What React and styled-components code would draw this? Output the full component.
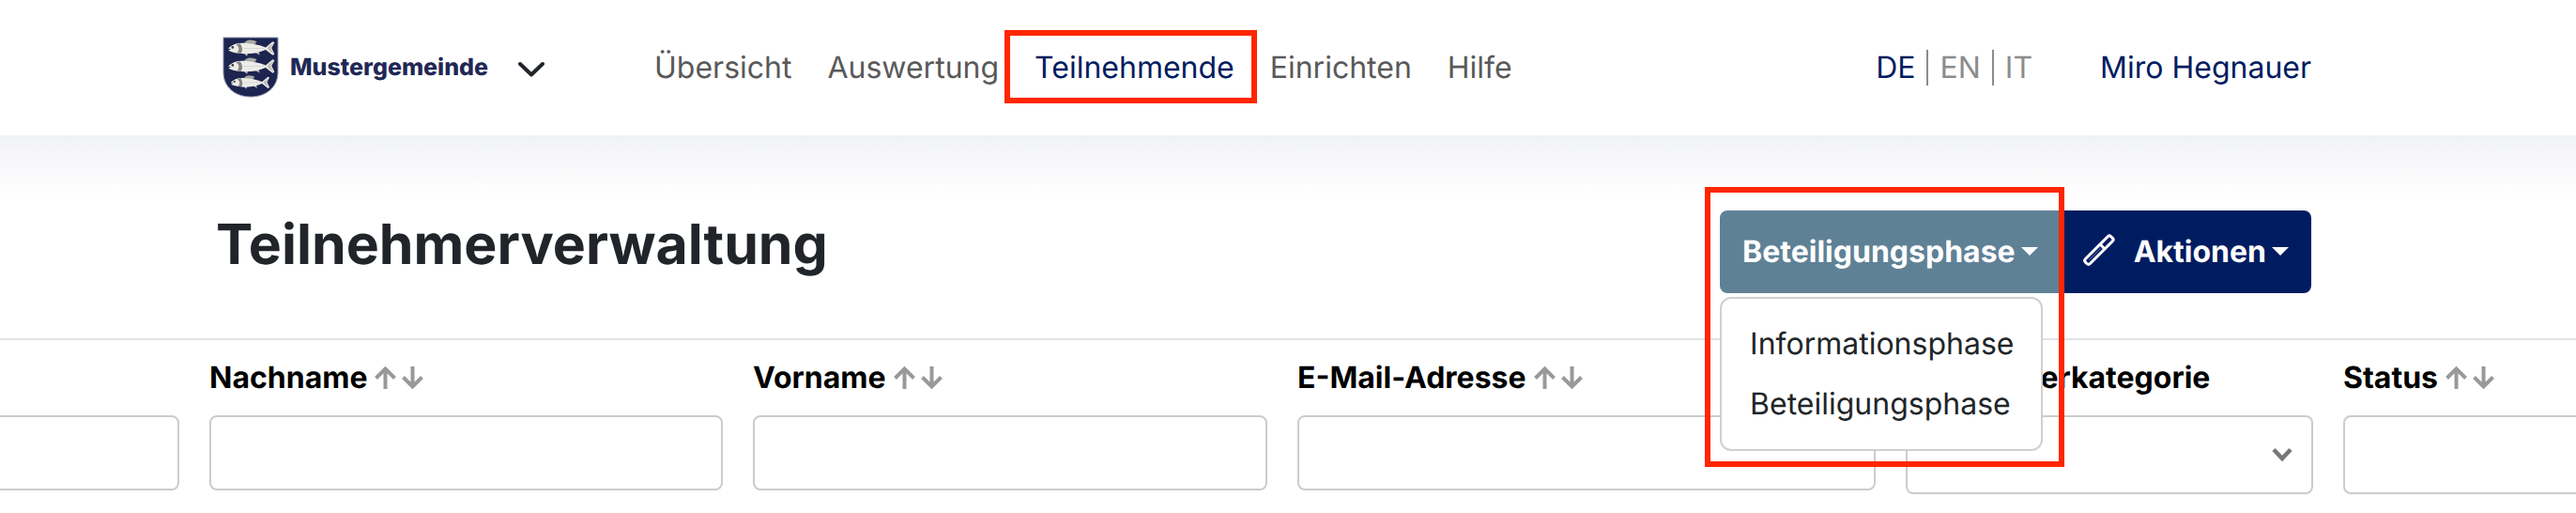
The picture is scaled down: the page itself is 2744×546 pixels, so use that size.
import React from 'react'
import styled, { createGlobalStyle } from 'styled-components'

const columns = [
  { id: 'id', label: '', width: 580 },
  { id: 'lastname', label: 'Nachname', width: 579, sortable: true },
  { id: 'firstname', label: 'Vorname', width: 580, sortable: true },
  { id: 'email', label: 'E-Mail-Adresse', width: 648, sortable: true },
  { id: 'category', label: 'Teilnehmerkategorie', width: 466, select: true },
  { id: 'status', label: 'Status', width: 580, sortable: true, tall: true },
]

const Fish = ({ y, x = 0, scale = 1 }) => (
  <g transform={`translate(${x} ${y}) scale(${scale})`}>
    <path d="M18 5 Q21 0 28 2 L31 3 L29 6 Z" fill="#a9a9a4" />
    <path d="M29 14 L34 17 L33 13 Z M18 15 L21 18 L22 15 Z" fill="#b5b5b0" />
    <path
      d="M2 10 Q8 4 18 4.500 Q30 5 40 9 L47 3 L49 4 L46 9.500 L49 16 L47 17 L40 11.500 Q30 16 18 15.500 Q7 15 2 12 L5 11 Z"
      fill="#ecece8"
    />
    <path d="M10 6 Q15 10 11 14.500 L15 15 Q18 10 14 5 Z" fill="#85857f" />
    <path d="M42 9 L48 4 L45 9.500 L48 16 L42 11 Z" fill="#bdbdb8" />
    <path d="M18 10 H38" stroke="#c9c9c4" strokeWidth="0.8" strokeDasharray="2 1" />
    <circle cx="6.500" cy="9" r="1.300" fill="#44443f" />
  </g>
)

const Crest = () => (
  <svg width="60" height="66" viewBox="0 0 60 66" aria-hidden="true">
    <path
      d="M1 1 H59 V38 C59 54 46 64 30 64 C14 64 1 54 1 38 Z"
      fill="#1c2450"
      stroke="#8d90a6"
      strokeWidth="1"
    />
    <Fish x={4} y={2} scale={1.05} />
    <Fish x={4} y={21} scale={1.05} />
    <Fish x={7} y={40} scale={0.88} />
  </svg>
)

const Chevron = () => (
  <svg width="28" height="20" viewBox="0 0 28 20" aria-hidden="true">
    <path
      d="M2 6 L14 17.500 L26 6"
      fill="none"
      stroke="#212529"
      strokeWidth="4"
      strokeLinecap="round"
      strokeLinejoin="round"
    />
  </svg>
)

const Pen = () => (
  <svg width="34" height="38" viewBox="0 0 34 38" aria-hidden="true">
    <g
      transform="translate(17 17) rotate(-45)"
      fill="none"
      stroke="#fff"
      strokeWidth="3"
      strokeLinejoin="round"
    >
      <path d="M-17 -3.500 H17 Q19 -3.500 19 -1.500 V1.500 Q19 3.500 17 3.500 H-17 Q-19.500 3.500 -19.500 1 V-1 Q-19.500 -3.500 -17 -3.500 Z" />
      <path d="M5 -3.500 V3.500" />
      <path d="M-15 0 H3" strokeWidth="1" opacity="0.3" />
    </g>
  </svg>
)

const SortArrows = () => (
  <svg width="52" height="24" viewBox="0 0 52 24" aria-hidden="true">
    <g fill="none" stroke="#999" strokeWidth="4">
      <path d="M11.500 24 V3 M1.500 12.500 L11.500 2.500 L21.500 12.500" />
      <path d="M40.500 0 V21 M30.500 11.500 L40.500 21.500 L50.500 11.500" />
    </g>
  </svg>
)

const Header = () => (
  <Topbar>
    <Brand type="button">
      <Crest />
      <BrandName>Mustergemeinde</BrandName>
      <Chevron />
    </Brand>
    <Nav>
      <NavLink href="#uebersicht">Übersicht</NavLink>
      <NavLink href="#auswertung">Auswertung</NavLink>
      <NavLink href="#teilnehmende" $active>
        Teilnehmende
      </NavLink>
      <NavLink href="#einrichten">Einrichten</NavLink>
      <NavLink href="#hilfe">Hilfe</NavLink>
    </Nav>
    <Languages>
      <Language href="#de" $active>
        DE
      </Language>
      <Language href="#en">EN</Language>
      <Language href="#it">IT</Language>
    </Languages>
    <User href="#profil">Miro Hegnauer</User>
  </Topbar>
)

const Filter = ({ column }) => {
  if (column.select) {
    return (
      <SelectWrap>
        <Select id={column.id} defaultValue="">
          <option value="" />
        </Select>
        <svg width="22" height="16" viewBox="0 0 22 16" aria-hidden="true">
          <path d="M2 2.500 L11 12 L20 2.500" fill="none" stroke="#777" strokeWidth="4.500" />
        </svg>
      </SelectWrap>
    )
  }
  return (
    <Input
      id={column.id}
      type="text"
      aria-label={column.label ? undefined : 'Filter'}
      $tall={column.tall}
    />
  )
}

const App = () => (
  <>
    <GlobalStyle />
    <Header />
    <main>
      <TitleBar>
        <Title>Teilnehmerverwaltung</Title>
        <Actions>
          <Dropdown>
            <Button type="button" $phase aria-expanded="true">
              Beteiligungsphase
              <Caret />
            </Button>
            <Menu>
              <MenuItem type="button">Informationsphase</MenuItem>
              <MenuItem type="button">Beteiligungsphase</MenuItem>
            </Menu>
          </Dropdown>
          <Button type="button">
            <Pen />
            <ButtonText>Aktionen</ButtonText>
            <Caret />
          </Button>
        </Actions>
      </TitleBar>
      <TableWrap>
        <Table>
          <colgroup>
            {columns.map(column => (
              <Col key={column.id} $width={column.width} />
            ))}
          </colgroup>
          <thead>
            <tr>
              {columns.map(column => (
                <Th key={column.id} scope="col">
                  <Heading>
                    <label htmlFor={column.id}>{column.label}</label>
                    {column.sortable && (
                      <Sort type="button" aria-label="Sortieren">
                        <SortArrows />
                      </Sort>
                    )}
                  </Heading>
                </Th>
              ))}
            </tr>
          </thead>
          <tbody>
            <tr>
              {columns.map(column => (
                <Td key={column.id}>
                  <Filter column={column} />
                </Td>
              ))}
            </tr>
          </tbody>
        </Table>
      </TableWrap>
    </main>
  </>
)

const GlobalStyle = createGlobalStyle`
  *, *::before, *::after {
    box-sizing: border-box;
  }

  body {
    margin: 0;
    background: white;
    color: #212529;
    font-family: Inter, 'Liberation Sans', sans-serif;
    font-size: 32px;
    line-height: 48px;
    text-rendering: geometricPrecision;
    overflow-x: hidden;
  }

  button, input, select {
    font: inherit;
    color: inherit;
    text-rendering: inherit;
  }

  a {
    text-decoration: none;
  }

  svg {
    display: block;
    flex: none;
  }
`

const Topbar = styled.header`
  display: flex;
  align-items: center;
  height: 144px;
  padding: 0 282px 0 237px;
  background: white;
`

const Brand = styled.button`
  display: flex;
  align-items: center;
  padding: 0;
  border: 0;
  background: none;
`

const BrandName = styled.span`
  margin: 0 32px 0 12px;
  color: #1f2855;
  font-size: 25px;
  font-weight: 800;
`

const Nav = styled.nav`
  display: flex;
  gap: 38px;
  margin-left: 117px;
`

const NavLink = styled.a`
  position: relative;
  color: ${({ $active }) => ($active ? '#001c60' : '#595959')};

  &::after {
    content: ${({ $active }) => ($active ? "''" : 'none')};
    position: absolute;
    inset: -16px -24px -14px -32px;
    border: 6px solid #ff2600;
  }
`

const Languages = styled.div`
  display: flex;
  margin-left: auto;
`

const Language = styled.a`
  display: flex;
  align-items: center;
  color: ${({ $active }) => ($active ? '#001c60' : '#8c8c8c')};

  &:not(:first-child)::before {
    content: '';
    width: 2px;
    height: 38px;
    margin: 0 12px;
    background: #8c8c8c;
  }
`

const User = styled.a`
  margin-left: 72px;
  color: #001c60;
`

const TitleBar = styled.div`
  display: flex;
  align-items: flex-start;
  justify-content: space-between;
  padding: 80px 282px 48px 230px;
  background: linear-gradient(#f1f2f6, #fff 64px);
`

const Title = styled.h1`
  margin: 0;
  font-size: 59px;
  font-weight: 700;
  line-height: 74px;
`

const Actions = styled.div`
  display: flex;
`

const Dropdown = styled.div`
  position: relative;
  z-index: 2;

  &::after {
    content: '';
    position: absolute;
    top: -25px;
    left: -16px;
    width: 383px;
    height: 298px;
    border: 6px solid #ff2600;
    pointer-events: none;
  }
`

const Button = styled.button`
  display: flex;
  align-items: center;
  height: 88px;
  padding: 0 24px;
  border: 0;
  border-radius: ${({ $phase }) => ($phase ? '8px 0 0 8px' : '0 8px 8px 0')};
  background: ${({ $phase }) => ($phase ? '#5f8196' : '#001c60')};
  color: white;
  font-weight: 700;
`

const ButtonText = styled.span`
  margin-left: 20px;
`

const Caret = styled.span`
  margin: 0 0 2px 6px;
  border: 9px solid transparent;
  border-top-color: white;
  border-bottom: 0;
`

const Menu = styled.div`
  position: absolute;
  top: 92px;
  left: 0;
  width: 344px;
  padding: 16px 0;
  border: 2px solid #d0d0d0;
  border-radius: 12px;
  background: white;
`

const MenuItem = styled.button`
  display: block;
  width: 100%;
  padding: 8px 30px;
  border: 0;
  background: none;
  text-align: left;
`

const TableWrap = styled.div`
  overflow: hidden;
  border-top: 2px solid #dee2e6;
`

// wider than the window, scrolled past most of the first column
const Table = styled.table`
  width: 3433px;
  margin-left: -373px;
  border-collapse: collapse;
  table-layout: fixed;
`

const Col = styled.col`
  width: ${({ $width }) => $width}px;
`

const Th = styled.th`
  padding: 16px 16px 8px;
  color: black;
  font-weight: 700;
  text-align: left;
`

const Heading = styled.div`
  display: flex;
  align-items: center;
  gap: 8px;
  height: 48px;
`

const Sort = styled.button`
  padding: 0;
  border: 0;
  background: none;
`

const Td = styled.td`
  padding: 8px 16px;
  vertical-align: top;
`

const Input = styled.input`
  display: block;
  width: 100%;
  height: ${({ $tall }) => ($tall ? 84 : 80)}px;
  padding: 0 24px;
  border: 2px solid #ccc;
  border-radius: 8px;
  background: white;
`

const SelectWrap = styled.div`
  position: relative;

  svg {
    position: absolute;
    right: 22px;
    top: 34px;
    pointer-events: none;
  }
`

const Select = styled.select`
  display: block;
  width: 100%;
  height: 84px;
  padding: 0 24px;
  border: 2px solid #ccc;
  border-radius: 8px;
  background: white;
  appearance: none;
`

export default App
